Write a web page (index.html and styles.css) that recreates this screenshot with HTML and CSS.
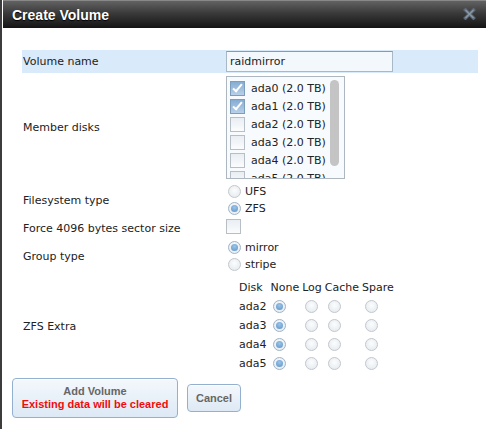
FILE: index.html
```html
<!DOCTYPE html>
<html>
<head>
  <meta charset="UTF-8">
  <title>Create Volume</title>
  <link rel="stylesheet" href="styles.css">
</head>
<body>
  <div class="dialog">
    <div class="titlebar">
      <span class="title">Create Volume</span>
      <span class="close">
        <svg width="13" height="12" viewBox="0 0 13 12">
          <path d="M2.5 2 L10.5 10 M10.5 2 L2.5 10" stroke="#5d6b7a" stroke-width="3.4" stroke-linecap="square"/>
          <path d="M2.5 2 L10.5 10 M10.5 2 L2.5 10" stroke="#8d9aa8" stroke-width="1.2"/>
        </svg>
      </span>
    </div>

    <div class="content">
      <div class="form">
        <!-- Volume name -->
        <div class="row highlight">
          <div class="label">Volume name</div>
          <div class="field">
            <input type="text" class="text-input" value="raidmirror">
          </div>
        </div>

        <!-- Member disks -->
        <div class="row">
          <div class="label">Member disks</div>
          <div class="field">
            <div class="disk-list">
              <div class="disk-items">
                <label class="disk"><span class="check checked"></span>ada0 (2.0 TB)</label>
                <label class="disk"><span class="check checked"></span>ada1 (2.0 TB)</label>
                <label class="disk"><span class="check"></span>ada2 (2.0 TB)</label>
                <label class="disk"><span class="check"></span>ada3 (2.0 TB)</label>
                <label class="disk"><span class="check"></span>ada4 (2.0 TB)</label>
                <label class="disk"><span class="check"></span>ada5 (2.0 TB)</label>
              </div>
              <div class="scrollbar"><div class="thumb"></div></div>
            </div>
          </div>
        </div>

        <!-- Filesystem type -->
        <div class="row">
          <div class="label">Filesystem type</div>
          <div class="field radios">
            <label class="opt"><span class="radio"></span>UFS</label>
            <label class="opt"><span class="radio on"></span>ZFS</label>
          </div>
        </div>

        <div class="row">
          <div class="label">Force 4096 bytes sector size</div>
          <div class="field"><span class="check"></span></div>
        </div>

        <div class="row">
          <div class="label">Group type</div>
          <div class="field radios">
            <label class="opt"><span class="radio on"></span>mirror</label>
            <label class="opt"><span class="radio"></span>stripe</label>
          </div>
        </div>

        <!-- ZFS extra -->
        <div class="row extra-row">
          <div class="label">ZFS Extra</div>
          <div class="field">
            <table class="extra">
              <tr>
                <th>Disk</th>
                <th>None</th>
                <th>Log</th>
                <th>Cache</th>
                <th>Spare</th>
              </tr>
              <tr>
                <td>ada2</td>
                <td><span class="radio on"></span></td>
                <td><span class="radio"></span></td>
                <td><span class="radio"></span></td>
                <td><span class="radio"></span></td>
              </tr>
              <tr>
                <td>ada3</td>
                <td><span class="radio on"></span></td>
                <td><span class="radio"></span></td>
                <td><span class="radio"></span></td>
                <td><span class="radio"></span></td>
              </tr>
              <tr>
                <td>ada4</td>
                <td><span class="radio on"></span></td>
                <td><span class="radio"></span></td>
                <td><span class="radio"></span></td>
                <td><span class="radio"></span></td>
              </tr>
              <tr>
                <td>ada5</td>
                <td><span class="radio on"></span></td>
                <td><span class="radio"></span></td>
                <td><span class="radio"></span></td>
                <td><span class="radio"></span></td>
              </tr>
            </table>
          </div>
        </div>
      </div>

      <div class="buttons">
        <button class="btn btn-add">Add Volume<br><span class="warn">Existing data will be cleared</span></button>
        <button class="btn btn-cancel">Cancel</button>
      </div>
    </div>
  </div>
</body>
</html>
```

FILE: styles.css
```css
body {
  margin: 0;
  background: #fff;
  font-family: 'DejaVu Sans', Verdana, sans-serif;
  font-size: 11px;
  color: #222;
}

.dialog {
  height: 429px;
  border-left: 2px solid #3c3c3c;
  box-sizing: border-box;
}

/* Dark title bar */
.titlebar {
  height: 28px;
  box-sizing: border-box;
  margin-left: 1px;
  margin-right: 2px;
  border-top: 1px solid #888;
  background: linear-gradient(180deg, #626262 0%, #3a3a3a 45%, #141414 100%);
  display: flex;
  align-items: center;
  justify-content: space-between;
  padding: 0 10px 0 9px;
}

.title {
  color: #fff;
  font-family: 'Liberation Sans', Arial, sans-serif;
  font-weight: bold;
  font-size: 14px;
  text-shadow: 0 1px 1px #000;
}

.close {
  display: flex;
  margin-top: -2px;
}

.content {
  padding: 22px 8px 0 10px;
}

/* Form rows */
.form {
  margin-left: 10px;
  width: 456px;
}

.row {
  display: grid;
  grid-template-columns: 204px 1fr;
  align-items: center;
  padding: 1px 0;
}

.row.highlight {
  background: #d9eafa;
  height: 23px;
  box-sizing: border-box;
}

.label {
  padding-left: 1px;
  white-space: nowrap;
}

.text-input {
  width: 167px;
  height: 21px;
  box-sizing: border-box;
  border: 1px solid #a9b8c6;
  border-top-color: #8c99a6;
  background: #f3f8fd;
  font-family: inherit;
  font-size: 11px;
  color: #222;
  padding: 0 3px;
  outline: none;
}

/* Member disk list */
.disk-list {
  width: 119px;
  height: 103px;
  box-sizing: border-box;
  margin: 2px 0;
  border: 1px solid #aeb6c0;
  background: #f8fbfe;
  display: flex;
  overflow: hidden;
}

.disk-items {
  flex: 1;
  padding-top: 2px;
}

.disk {
  display: flex;
  align-items: center;
  height: 18px;
  padding-left: 3px;
  white-space: nowrap;
}

.disk .check {
  margin-right: 6px;
}

.scrollbar {
  width: 12px;
  padding: 3px 2px 0 0;
}

.thumb {
  width: 9px;
  height: 86px;
  border-radius: 5px;
  background: #c4c4c4;
}

/* Checkboxes and radios */
.check {
  display: inline-block;
  width: 15px;
  height: 15px;
  box-sizing: border-box;
  border: 1px solid #b7bec6;
  background: linear-gradient(180deg, #e9eef3 0%, #fbfcfd 100%);
  position: relative;
  flex: none;
}

.check.checked {
  border-color: #7d9dbd;
  background: linear-gradient(180deg, #86acd3 0%, #b8d0e8 100%);
}

.check.checked::after {
  content: "";
  position: absolute;
  left: 4px;
  top: 0px;
  width: 3px;
  height: 8px;
  border: solid #fff;
  border-width: 0 2px 2px 0;
  transform: rotate(40deg);
}

.radios {
  display: flex;
  flex-direction: column;
}

.opt {
  display: flex;
  align-items: center;
  height: 17px;
}

.opt .radio {
  margin: 0 4px 0 2px;
}

.radio {
  display: inline-block;
  width: 13px;
  height: 13px;
  box-sizing: border-box;
  border-radius: 50%;
  border: 1px solid #c2c8ce;
  background: radial-gradient(circle at 50% 40%, #fbfcfd 0%, #e3e8ec 100%);
  position: relative;
  flex: none;
  vertical-align: middle;
}

.radio.on {
  border-color: #9fb4c8;
}

.radio.on::after {
  content: "";
  position: absolute;
  left: 2px;
  top: 2px;
  width: 7px;
  height: 7px;
  border-radius: 50%;
  background: radial-gradient(circle at 50% 35%, #9cc4e8 0%, #5b93c8 100%);
}

/* ZFS extra table */
.extra-row {
  padding-top: 6px;
}

.extra {
  border-collapse: collapse;
  margin-left: 11px;
}

.extra th {
  font-weight: normal;
  text-align: left;
  height: 14px;
  padding: 0 1px 3px 2px;
}

.extra td {
  height: 19px;
  padding: 0 2px 0 5px;
  text-align: left;
}

.extra td:first-child {
  padding-left: 2px;
}

.extra td .radio {
  vertical-align: -2px;
}

/* Buttons */
.buttons {
  display: flex;
  align-items: center;
  gap: 9px;
  margin-top: 4px;
}

.btn {
  font-family: 'Liberation Sans', Arial, sans-serif;
  font-size: 11px;
  font-weight: bold;
  color: #666;
  border: 1px solid #93b1cf;
  border-radius: 4px;
  background: linear-gradient(180deg, #f4f8fc 0%, #dde9f5 100%);
  box-shadow: inset 0 1px 0 #fff;
  padding: 0;
  white-space: nowrap;
  cursor: pointer;
}

.btn-add {
  width: 166px;
  height: 40px;
  line-height: 13px;
}

.warn {
  color: #f00c0c;
}

.btn-cancel {
  width: 54px;
  height: 28px;
}
```
